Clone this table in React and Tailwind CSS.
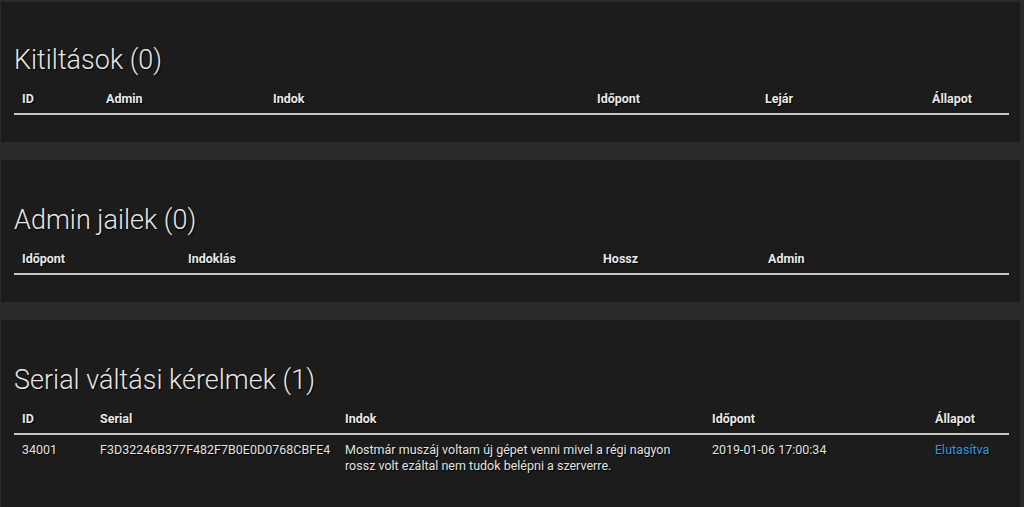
const bans = {
  cols: [
    ['ID', 84],
    ['Admin', 167],
    ['Indok', 324],
    ['Időpont', 168],
    ['Lejár', 167],
    ['Állapot', 85],
  ],
  rows: [],
}

const jails = {
  cols: [
    ['Időpont', 166],
    ['Indoklás', 415],
    ['Hossz', 165],
    ['Admin', 249],
  ],
  rows: [],
}

const serials = {
  cols: [
    ['ID', 78],
    ['Serial', 245],
    ['Indok', 367],
    ['Időpont', 223],
    ['Állapot', 82],
  ],
  rows: [
    [
      '34001',
      'F3D32246B377F482F7B0E0D0768CBFE4',
      'Mostmár muszáj voltam új gépet venni mivel a régi nagyon rossz volt ezáltal nem tudok belépni a szerverre.',
      '2019-01-06 17:00:34',
      'Elutasítva',
    ],
  ],
}

function Panel({ title, table, first, last }) {
  return (
    <section className={`bg-[#1c1c1c] pl-[13px] pr-[11px] ${last ? 'pb-[40px]' : 'pb-[27px]'}`}>
      <h2
        className={`h-[32px] text-[27px] leading-[32px] font-light text-[#e6e6e6] [text-shadow:1px_1px_1px_#000] ${
          first ? 'mt-[42px]' : 'mt-[44px]'
        }`}
      >
        {title}
      </h2>
      <table className="mt-[7px] w-[995px] table-fixed border-collapse text-[12.5px]">
        <colgroup>
          {table.cols.map(([name, w]) => (
            <col key={name} style={{ width: w }} />
          ))}
        </colgroup>
        <thead>
          <tr className="border-b-2 border-[#c8c8c8]">
            {table.cols.map(([name]) => (
              <th
                key={name}
                className="px-2 pt-[7px] pb-[5px] text-left font-bold leading-[18px] text-[#e8e8e8] [text-shadow:1px_1px_1px_#000]"
              >
                {name}
              </th>
            ))}
          </tr>
        </thead>
        <tbody>
          {table.rows.map((row, i) => (
            <tr key={i}>
              {row.map((cell, j) => (
                <td
                  key={j}
                  className={`px-2 pt-[7px] pb-2 align-top leading-[16px] [text-shadow:1px_1px_1px_#000] ${
                    j === row.length - 1 ? 'text-[#2a9de2]' : 'text-[#e2e2e2]'
                  }`}
                >
                  {cell}
                </td>
              ))}
            </tr>
          ))}
        </tbody>
      </table>
    </section>
  )
}

export default function App() {
  return (
    <div className="min-h-[507px] bg-[#2a2a2a] pl-[1px] pr-[4px] pt-[2px] font-['Roboto',sans-serif]">
      <div className="flex flex-col gap-[18px]">
        <Panel title="Kitiltások (0)" table={bans} first />
        <Panel title="Admin jailek (0)" table={jails} />
        <Panel title="Serial váltási kérelmek (1)" table={serials} last />
      </div>
    </div>
  )
}
